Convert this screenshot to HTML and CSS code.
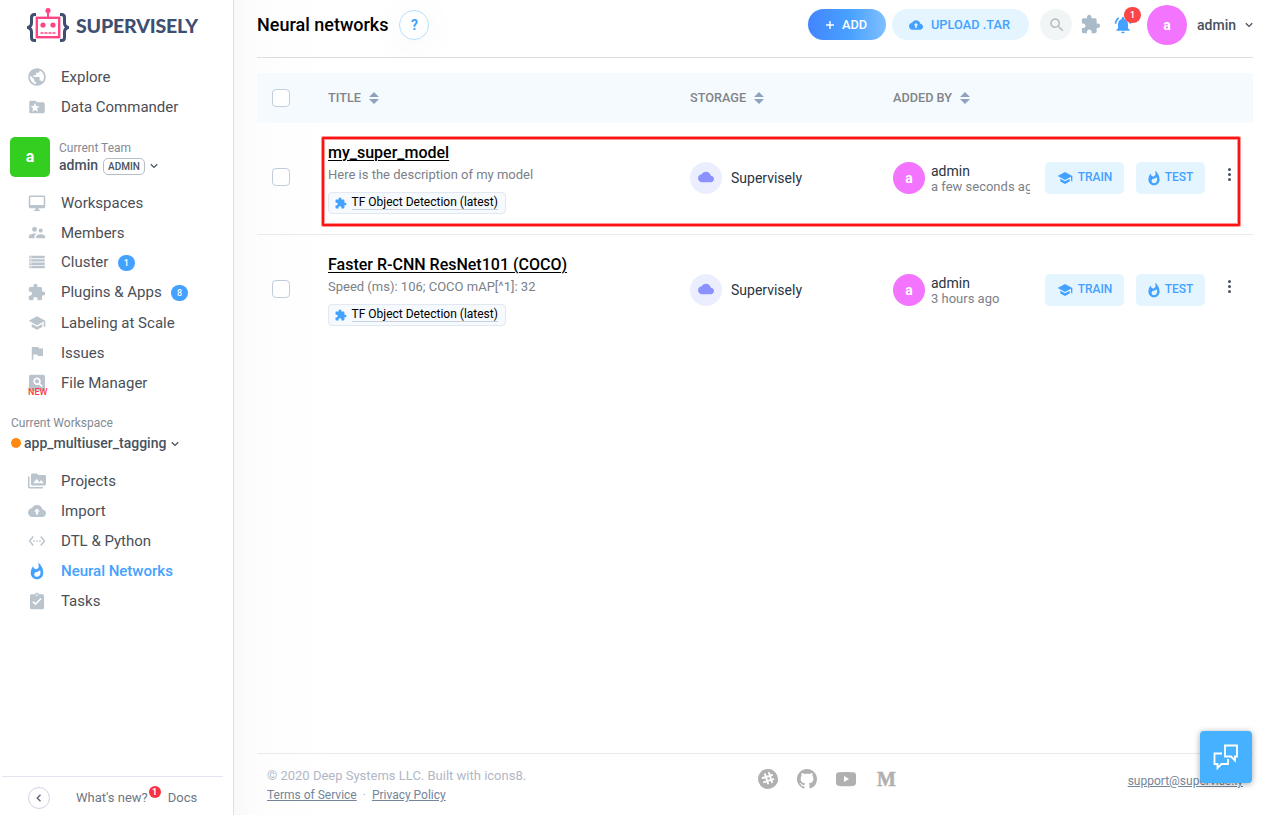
FILE: index.html
```html
<!DOCTYPE html>
<html lang="en">
<head>
<meta charset="utf-8">
<title>Neural networks</title>
<link rel="stylesheet" href="styles.css">
</head>
<body>
<svg class="sprite" aria-hidden="true">
  <symbol id="globe" viewBox="1.7 1.7 20.6 20.6"><path d="M12 2C6.48 2 2 6.48 2 12s4.48 10 10 10 10-4.48 10-10S17.52 2 12 2zm-1 17.930c-3.950-.490-7-3.850-7-7.930 0-.620.080-1.210.210-1.790L9 15v1c0 1.100.900 2 2 2v1.930zm6.900-2.540c-.260-.810-1-1.390-1.900-1.390h-1v-3c0-.550-.450-1-1-1H8v-2h2c.550 0 1-.450 1-1V7h2c1.100 0 2-.900 2-2v-.410c2.930 1.190 5 4.060 5 7.410 0 2.080-.800 3.970-2.100 5.390z"/></symbol>
  <symbol id="folder" viewBox="0.400 0.400 23.200 23.200"><path fill-rule="evenodd" d="M20 6h-8l-2-2H4c-1.100 0-2 .9-2 2v12c0 1.100.9 2 2 2h16c1.100 0 2-.9 2-2V8c0-1.100-.9-2-2-2zm-6.920 12L9.500 15.900 5.920 18l.95-4.070-3.160-2.740 4.160-.36L9.500 7l1.630 3.840 4.160.36-3.160 2.740z"/></symbol>
  <symbol id="monitor" viewBox="0 0 24 24"><path fill-rule="evenodd" d="M21 2H3c-1.100 0-2 .9-2 2v13c0 1.100.9 2 2 2h7v1.500l-2 1V22.500h8V21.500l-2-1V19h7c1.100 0 2-.9 2-2V4c0-1.100-.9-2-2-2zm0 12.500H3V4h18z"/></symbol>
  <symbol id="people" viewBox="1 1.500 22 22"><path d="M16.500 12c1.380 0 2.490-1.120 2.490-2.500S17.880 7 16.500 7 14 8.120 14 9.500s1.120 2.500 2.500 2.500zM9 11c1.660 0 2.990-1.340 2.990-3S10.660 5 9 5 6 6.340 6 8s1.340 3 3 3zm7.500 3c-1.830 0-5.500.92-5.500 2.750V19h11v-2.250c0-1.830-3.670-2.750-5.500-2.750zM9 13c-2.330 0-7 1.170-7 3.500V19h7v-2.250c0-.85.33-2.340 2.370-3.470C10.500 13.100 9.660 13 9 13z"/></symbol>
  <symbol id="storage" viewBox="0.400 0.400 23.200 23.200"><path fill-rule="evenodd" d="M2 4h20v3.200H2zm1.500 1v1.200h1.500V5zM2 8.300h20v3.200H2zm1.500 1v1.200h1.500V9.300zM2 12.600h20v3.200H2zm1.500 1v1.200h1.500v-1.200zM2 16.900h20v3.200H2zm1.500 1v1.200h1.500v-1.200z"/></symbol>
  <symbol id="puzzle" viewBox="1 0 23 23"><path d="M20.500 11H19V7c0-1.100-.9-2-2-2h-4V3.500C13 2.120 11.880 1 10.500 1S8 2.120 8 3.500V5H4c-1.100 0-1.990.9-1.990 2v3.800H3.500c1.490 0 2.700 1.210 2.700 2.700s-1.210 2.700-2.700 2.700H2V20c0 1.100.9 2 2 2h3.800v-1.500c0-1.490 1.210-2.700 2.700-2.700s2.700 1.210 2.700 2.700V22H17c1.100 0 2-.9 2-2v-4h1.500c1.380 0 2.500-1.120 2.500-2.500S21.880 11 20.500 11z"/></symbol>
  <symbol id="school" viewBox="0 0 24 24"><path d="M5 13.180v4L12 21l7-3.820v-4L12 17l-7-3.820zM12 3L1 9l11 6 9-4.910V17h2V9L12 3z"/></symbol>
  <symbol id="flag" viewBox="0 0 24 24"><path d="M14.400 6L14 4H5v17h2v-7h5.600l.4 2h7V6z"/></symbol>
  <symbol id="finder" viewBox="0.700 1 22.600 22.600"><path fill-rule="evenodd" d="M4 2h16a2 2 0 0 1 2 2v16a2 2 0 0 1-2 2H4a2 2 0 0 1-2-2V4a2 2 0 0 1 2-2zm8 3.500a4.700 4.700 0 1 0 2.500 8.700l3.300 3.300 1.500-1.500-3.300-3.300A4.700 4.700 0 0 0 12 5.500zm0 2a2.700 2.700 0 1 1 0 5.400 2.700 2.700 0 0 1 0-5.400z"/></symbol>
  <symbol id="photos" viewBox="0 0 24 24"><path fill-rule="evenodd" d="M2 6H0v14c0 1.100.9 2 2 2h18v-2H2V6zm20-2h-8l-2-2H6c-1.100 0-2 .9-2 2v12c0 1.100.9 2 2 2h16c1.100 0 2-.9 2-2V6c0-1.100-.9-2-2-2zM7 15l4.500-6 3.500 4.510 2.500-3.010L21 15H7z"/></symbol>
  <symbol id="upload" viewBox="0 0 24 24"><path d="M19.350 10.040C18.670 6.590 15.640 4 12 4 9.110 4 6.600 5.640 5.350 8.040 2.340 8.360 0 10.910 0 14c0 3.310 2.690 6 6 6h13c2.760 0 5-2.240 5-5 0-2.640-2.050-4.780-4.650-4.960zM13.500 12.500v4h-3v-4H8l4-4 4 4z"/></symbol>
  <symbol id="cloud" viewBox="0 0 24 24"><path d="M19.350 10.040C18.670 6.590 15.640 4 12 4 9.110 4 6.600 5.640 5.350 8.040 2.340 8.360 0 10.910 0 14c0 3.310 2.690 6 6 6h13c2.760 0 5-2.240 5-5 0-2.640-2.050-4.780-4.650-4.960z"/></symbol>
  <symbol id="code" viewBox="0 0 24 24"><path d="M7.770 6.760L6.230 5.480.82 12l5.410 6.520 1.540-1.280L3.420 12l4.350-5.240zM7 13h2v-2H7v2zm10-2h-2v2h2v-2zm-6 2h2v-2h-2v2zm6.770-7.520l-1.540 1.280L20.580 12l-4.350 5.240 1.540 1.280L23.180 12l-5.410-6.520z"/></symbol>
  <symbol id="fire" viewBox="0.500 0 23 23"><path d="M13.500.67s.74 2.650.74 4.800c0 2.060-1.350 3.730-3.410 3.730-2.070 0-3.630-1.670-3.630-3.730l.03-.36C5.210 7.510 4 10.620 4 14c0 4.420 3.580 8 8 8s8-3.580 8-8C20 8.610 17.410 3.800 13.500.67zM11.710 19c-1.780 0-3.220-1.400-3.220-3.140 0-1.620 1.050-2.760 2.810-3.120 1.770-.36 3.600-1.210 4.620-2.580.39 1.290.59 2.650.59 4.040 0 2.650-2.150 4.800-4.800 4.800z"/></symbol>
  <symbol id="task" viewBox="0.500 0 23 23"><path d="M19 3h-4.180C14.400 1.840 13.300 1 12 1c-1.300 0-2.400.84-2.820 2H5c-1.100 0-2 .9-2 2v15c0 1.100.9 2 2 2h14c1.100 0 2-.9 2-2V5c0-1.100-.9-2-2-2zm-7 0c.55 0 1 .45 1 1s-.45 1-1 1-1-.45-1-1 .45-1 1-1zm-2 14l-4-4 1.410-1.410L10 14.170l6.590-6.590L18 9l-8 8z"/></symbol>
  <symbol id="search" viewBox="0 0 24 24"><path d="M15.500 14h-.79l-.28-.27C15.410 12.590 16 11.110 16 9.500 16 5.910 13.090 3 9.500 3S3 5.910 3 9.500 5.910 16 9.500 16c1.610 0 3.090-.59 4.230-1.570l.27.28v.79l5 4.990L20.490 19l-4.990-5zm-6 0C7.010 14 5 11.990 5 9.500S7.010 5 9.500 5 14 7.010 14 9.500 11.990 14 9.500 14z"/></symbol>
  <symbol id="bell" viewBox="0 0 24 24"><path d="M7.580 4.080L6.150 2.650C3.750 4.480 2.170 7.300 2.030 10.500h2c.15-2.650 1.510-4.970 3.550-6.420zM19.970 10.500h2c-.15-3.200-1.730-6.020-4.120-7.850l-1.420 1.430c2.020 1.450 3.390 3.770 3.540 6.420zM18 11c0-3.070-1.640-5.640-4.500-6.320V4c0-.83-.67-1.500-1.500-1.500s-1.500.67-1.500 1.500v.68C7.630 5.360 6 7.920 6 11v5l-2 2v1h16v-1l-2-2v-5zm-6 11c1.100 0 2-.9 2-2h-4c0 1.100.9 2 2 2z"/></symbol>
  <symbol id="down" viewBox="0 0 8 8"><path d="M.8 2.300L4 5.400 7.200 2.300" fill="none" stroke="currentColor" stroke-width="1.300"/></symbol>
  <symbol id="sort" viewBox="0 0 10 12"><path d="M5 0l5 5H0zM0 7h10l-5 5z"/></symbol>
</svg>

<div class="app">
  <aside class="sidebar">
    <div class="logo">
      <svg class="logo-mark" viewBox="0 0 42 36">
        <g fill="none" stroke="#3f4f72" stroke-width="3"><path d="M9 7.500H7.500Q4.500 7.500 4.500 10.500V16Q4.500 19.500 1 20.500Q4.500 21.500 4.500 25V30.500Q4.500 33.500 7.500 33.500H9"/><path d="M33 7.500h1.500q3 0 3 3V16q0 3.500 3.500 4.500q-3.500 1-3.500 4.500v5.500q0 3-3 3H33"/></g>
        <rect x="9.800" y="10.800" width="22.400" height="19.400" fill="none" stroke="#ff4583" stroke-width="2.400"/>
        <path d="M21 10V3" stroke="#ff4583" stroke-width="2"/>
        <circle cx="21" cy="3.500" r="2.600" fill="#ff4583"/><circle cx="16" cy="18" r="2.600" fill="#ff4583"/><circle cx="26" cy="18" r="2.600" fill="#ff4583"/>
        <path d="M13.500 26h15" stroke="#ff4583" stroke-width="1.600" stroke-dasharray="3 1"/>
      </svg>
      <span class="logo-text">SUPERVISELY</span>
    </div>
    <nav class="nav nav-top">
      <a class="item"><svg class="ico"><use href="#globe"/></svg>Explore</a>
      <a class="item"><svg class="ico"><use href="#folder"/></svg>Data Commander</a>
    </nav>
    <div class="team">
      <div class="team-avatar">a</div>
      <div class="team-info">
        <div class="caption">Current Team</div>
        <div class="team-name">admin<span class="role">ADMIN</span><svg class="chev"><use href="#down"/></svg></div>
      </div>
    </div>
    <nav class="nav nav-team">
      <a class="item"><svg class="ico"><use href="#monitor"/></svg>Workspaces</a>
      <a class="item"><svg class="ico"><use href="#people"/></svg>Members</a>
      <a class="item raised"><svg class="ico"><use href="#storage"/></svg>Cluster<span class="count">1</span></a>
      <a class="item raised"><svg class="ico"><use href="#puzzle"/></svg>Plugins &amp; Apps<span class="count">8</span></a>
      <a class="item"><svg class="ico"><use href="#school"/></svg>Labeling at Scale</a>
      <a class="item"><svg class="ico"><use href="#flag"/></svg>Issues</a>
      <a class="item"><svg class="ico"><use href="#finder"/></svg>File Manager<span class="new">NEW</span></a>
    </nav>
    <div class="workspace">
      <div class="caption">Current Workspace</div>
      <div class="workspace-name"><i class="dot"></i>app_multiuser_tagging<svg class="chev"><use href="#down"/></svg></div>
    </div>
    <nav class="nav">
      <a class="item"><svg class="ico"><use href="#photos"/></svg>Projects</a>
      <a class="item"><svg class="ico"><use href="#upload"/></svg>Import</a>
      <a class="item"><svg class="ico"><use href="#code"/></svg>DTL &amp; Python</a>
      <a class="item active"><svg class="ico"><use href="#fire"/></svg>Neural Networks</a>
      <a class="item"><svg class="ico"><use href="#task"/></svg>Tasks</a>
    </nav>
    <div class="side-foot">
      <span class="collapse"><svg viewBox="0 0 8 8"><path d="M5.500 .8L2.300 4l3.200 3.200" fill="none" stroke="#5b6675" stroke-width="1.400"/></svg></span>
      <span class="whats">What's new?<b class="alert">1</b></span>
      <span>Docs</span>
    </div>
  </aside>

  <main class="main">
    <header class="head">
      <h1>Neural networks</h1><span class="help">?</span>
      <div class="tools">
        <button class="btn add"><svg viewBox="0 0 10 10"><path d="M5 1v8M1 5h8" stroke="#fff" stroke-width="1.400"/></svg>ADD</button>
        <button class="btn tar"><svg class="tar-ico"><use href="#upload"/></svg>UPLOAD .TAR</button>
        <span class="find"><svg><use href="#search"/></svg></span>
        <svg class="apps"><use href="#puzzle"/></svg>
        <span class="bell"><svg><use href="#bell"/></svg><b>1</b></span>
        <span class="avatar big">a</span>
        <span class="user">admin</span><svg class="chev"><use href="#down"/></svg>
      </div>
    </header>

    <section class="table">
      <div class="row thead">
        <div><span class="check"></span></div>
        <div class="th">TITLE<svg><use href="#sort"/></svg></div>
        <div class="th">STORAGE<svg><use href="#sort"/></svg></div>
        <div class="th">ADDED BY<svg><use href="#sort"/></svg></div>
        <div></div>
      </div>
      <div class="row body">
        <div class="check-cell"><span class="check"></span></div>
        <div class="title-cell">
          <div><a class="name">my_super_model</a></div>
          <div class="desc">Here is the description of my model</div>
          <div class="tag"><svg><use href="#puzzle"/></svg><span>TF Object Detection (latest)</span></div>
        </div>
        <div class="flexcell"><span class="cloud"><svg><use href="#cloud"/></svg></span><span class="store">Supervisely</span></div>
        <div class="flexcell by"><span class="avatar">a</span><div class="who"><div>admin</div><div class="when">a few seconds ago</div></div></div>
        <div class="flexcell acts"><button class="act train"><svg><use href="#school"/></svg>TRAIN</button><button class="act test"><svg><use href="#fire"/></svg>TEST</button><span class="more"><i></i><i></i><i></i></span></div>
        <div class="highlight"></div>
      </div>
      <div class="row body">
        <div class="check-cell"><span class="check"></span></div>
        <div class="title-cell">
          <div><a class="name">Faster R-CNN ResNet101 (COCO)</a></div>
          <div class="desc">Speed (ms): 106; COCO mAP[^1]: 32</div>
          <div class="tag"><svg><use href="#puzzle"/></svg><span>TF Object Detection (latest)</span></div>
        </div>
        <div class="flexcell"><span class="cloud"><svg><use href="#cloud"/></svg></span><span class="store">Supervisely</span></div>
        <div class="flexcell by"><span class="avatar">a</span><div class="who"><div>admin</div><div class="when">3 hours ago</div></div></div>
        <div class="flexcell acts"><button class="act train"><svg><use href="#school"/></svg>TRAIN</button><button class="act test"><svg><use href="#fire"/></svg>TEST</button><span class="more"><i></i><i></i><i></i></span></div>
      </div>
    </section>

    <footer class="foot">
      <div class="legal">
        <div>© 2020 Deep Systems LLC. Built with icons8.</div>
        <div class="links"><a>Terms of Service</a><span>·</span><a>Privacy Policy</a></div>
      </div>
      <div class="social">
        <svg viewBox="0 0 20 20"><path d="M5 1Q11-1 14.500 1T19 6Q21 11 19 14.500T14 19Q9 21 5.500 19T1 14Q-1 9 1 5.500T5 1z"/><g stroke="#fff" stroke-width="1.900" stroke-linecap="round"><path d="M7 5.200l3 9.200M11 4l3 9.200M4.700 9l9.400-3M6 13.200l9.400-3"/></g></svg>
        <svg viewBox="0 0 16 16"><path d="M8 0C3.580 0 0 3.580 0 8c0 3.540 2.290 6.530 5.470 7.590.4.070.55-.17.55-.38 0-.19-.01-.82-.01-1.490-2.010.37-2.530-.49-2.690-.94-.09-.23-.48-.94-.82-1.130-.28-.15-.68-.52-.01-.53.63-.01 1.080.58 1.230.82.72 1.210 1.870.87 2.330.66.07-.52.28-.87.51-1.070-1.780-.2-3.640-.89-3.640-3.950 0-.87.31-1.590.82-2.150-.08-.2-.36-1.020.08-2.120 0 0 .67-.21 2.200.82.64-.18 1.320-.27 2-.27s1.360.09 2 .27c1.530-1.040 2.200-.82 2.200-.82.44 1.100.16 1.920.08 2.120.51.56.82 1.270.82 2.150 0 3.070-1.870 3.750-3.650 3.950.29.25.54.73.54 1.480 0 1.070-.01 1.930-.01 2.200 0 .21.15.46.55.38A8.010 8.010 0 0 0 16 8c0-4.420-3.580-8-8-8z"/></svg>
        <svg viewBox="0 0 20 20"><path fill-rule="evenodd" d="M3 3.200Q10 2.600 17 3.200Q20 3.500 20 6v8q0 2.500-3 2.900Q10 17.500 3 16.900Q0 16.500 0 14V6Q0 3.500 3 3.200zM8 7v6l5-3z"/></svg>
        <span class="medium">M</span>
      </div>
      <a class="support">support@supervise.ly</a>
    </footer>
    <div class="chat"><svg viewBox="0 0 26 26"><g fill="none" stroke="#fff" stroke-width="1.800"><path d="M12 1.500h12v11h-2v4l-4-4h-6z"/><path d="M9 9.500H1.500v10.500h3v4l4-4H15v-5"/></g></svg></div>
  </main>
</div>
</body>
</html>
```
FILE: styles.css
```css
* { box-sizing: border-box; }
body { margin: 0; font-family: Roboto, "Liberation Sans", sans-serif; font-size: 15px; color: #48525e; background: #fff; }
svg { fill: currentColor; flex: none; display: block; }
.sprite { position: absolute; width: 0; height: 0; }
.app { display: flex; height: 815px; overflow: hidden; }

.sidebar { width: 234px; flex: none; border-right: 1px solid #dfe0e8; display: flex; flex-direction: column; }
.logo { display: flex; align-items: center; height: 43px; padding: 6px 0 0 27px; gap: 7px; }
.logo-mark { width: 42px; height: 36px; }
.logo-text { font: 900 19.500px/24px Lato, sans-serif; color: #3f4f72; letter-spacing: -.15px; padding-top: 2px; }
.nav-top { padding-top: 19px; }
.item { display: flex; align-items: center; height: 30px; padding-left: 28px; position: relative; color: #4a4f57; }
.item.raised { padding-bottom: 2px; }
.ico { width: 18px; height: 18px; color: #bac4cd; margin-right: 15px; }
.active, .active .ico { color: #43a1ff; }
.active { font-weight: 500; }
.count { margin-left: 9.500px; width: 17px; height: 16px; border-radius: 8px; background: #43a1ff; color: #fff; font-size: 9px; line-height: 16px; text-align: center; font-weight: 500; margin-top: 1px; }
.new { position: absolute; left: 28px; top: 19px; font-size: 9px; line-height: 10px; font-weight: 500; color: #fb3b46; }
.caption { font-size: 12px; color: #838a93; line-height: 16px; }
.chev { width: 8px; height: 8px; color: #48525e; }
.team { display: flex; padding: 15px 0 0 10px; gap: 9px; }
.team-avatar { width: 40px; height: 40px; border-radius: 5px; background: #33ce1f; color: #fff; font-weight: 700; font-size: 16px; line-height: 40px; text-align: center; }
.team-info { padding-top: 3px; }
.team-name { display: flex; align-items: center; font-size: 14px; font-weight: 500; line-height: 18px; height: 17px; }
.role { border: 1px solid #b4bdc8; border-radius: 5px; font-size: 10px; line-height: 15px; height: 17px; padding: 0 4px; margin: 4px 5px 0 5px; }
.team-name .chev { margin-top: 2px; }
.nav-team { padding-top: 11px; }
.workspace { padding: 17px 0 11px 11px; }
.workspace-name { display: flex; align-items: center; font-size: 14px; font-weight: 500; line-height: 24px; }
.workspace .chev { margin: 1px 0 0 5px; }
.dot { width: 10px; height: 10px; border-radius: 5px; background: #ff8811; margin-right: 3px; }
.side-foot { margin: auto 10px 0 2px; border-top: 1px solid #e2e4ee; height: 39px; padding: 3px 0 0 26px; display: flex; align-items: center; font-size: 13px; color: #6f7783; }
.collapse { width: 22px; height: 22px; border: 1px solid #ced4e4; border-radius: 50%; margin-right: 26px; display: grid; place-items: center; }
.collapse svg { width: 8px; height: 8px; }
.whats { margin-right: 20px; position: relative; }
.alert { position: absolute; right: -13px; top: -4px; width: 12px; height: 12px; border-radius: 6px; background: #fa3240; color: #fff; font-size: 9px; line-height: 12px; text-align: center; }

.main { flex: 1; padding: 0 24px 0 23px; position: relative; display: flex; flex-direction: column; background: linear-gradient(90deg, #f9f9fa 0, #fdfdfd 22px, #fefefe 60px, #fff 100px); }
.head { height: 58px; border-bottom: 1px solid #dcdde3; display: flex; align-items: center; padding-bottom: 8px; }
h1 { margin: 0; font-size: 18px; font-weight: 500; color: #000; }
.help { width: 30px; height: 30px; border: 1px solid #b8e0fb; border-radius: 50%; margin-left: 11px; background: #fff; color: #43a1ff; font-weight: 700; font-size: 14px; line-height: 28px; text-align: center; box-shadow: 0 6px 40px rgba(0,0,0,.06); }
.tools { margin-left: auto; display: flex; align-items: center; color: #48525e; }
.btn { border: 0; height: 31px; border-radius: 16px; font: 500 12.800px Roboto, sans-serif; display: flex; align-items: center; justify-content: center; padding: 0 2px 0 0; }
.add { width: 78px; color: #fff; background: linear-gradient(90deg, #4285ff, #49a2ff 55%, #80bfff); gap: 7px; }
.add svg { width: 10px; height: 10px; }
.tar { width: 137px; margin-left: 6px; background: #e4f5ff; color: #43a1ff; gap: 8px; }
.tar-ico { width: 14px; height: 14px; }
.find { width: 32px; height: 31px; border-radius: 16px; background: #f2f5f6; color: #b8bcbf; display: grid; place-items: center; margin-left: 11px; padding-left: 1px; }
.find svg { width: 18px; height: 18px; }
.apps { width: 20px; height: 20px; color: #a9bac9; margin: -2px 0 0 9px; }
.bell { position: relative; color: #43a1ff; margin-left: 12px; }
.bell svg { width: 20px; height: 20px; }
.bell b { position: absolute; left: 11px; top: -8px; width: 17px; height: 16px; border-radius: 8px; background: #fa4646; color: #fff; font-size: 9px; line-height: 16px; text-align: center; font-weight: 500; }
.avatar { width: 32px; height: 32px; border-radius: 50%; background: #f274ff; color: #fff; font-weight: 700; font-size: 14px; line-height: 32px; text-align: center; flex: none; }
.avatar.big { width: 40px; height: 40px; line-height: 40px; margin-left: 14px; }
.user { font-size: 14px; font-weight: 500; margin: 0 9px 0 10px; }

.table { margin-top: 15px; }
.row { display: grid; grid-template-columns: 71px 362px 203px 152px 1fr; position: relative; }
.thead { height: 50px; background: #f5fafe; align-items: center; }
.check { display: block; width: 18px; height: 18px; border: 1px solid #c2cddb; border-radius: 4px; background: #fff; margin-left: 15px; }
.th { display: flex; align-items: center; gap: 8px; font-size: 12.700px; line-height: 14px; padding-bottom: 1px; font-weight: 500; color: #818488; }
.th svg { width: 10px; height: 12px; color: #8fa3bd; }
.body { height: 112px; border-bottom: 1px solid #e8eaed; }
.body:last-child { border-bottom-color: transparent; }
.check-cell { padding-top: 45px; }
.title-cell { padding-top: 19px; }
.title-cell > :first-child { height: 22px; }
.name { font-size: 16px; line-height: 22px; font-weight: 500; color: #000; text-decoration: underline; text-underline-offset: 2px; text-decoration-thickness: 1px; }
.desc { font-size: 13px; line-height: 22px; color: #7b8189; }
.tag { display: inline-flex; align-items: flex-start; margin-top: 6px; height: 22px; padding: 3px 7.500px 0 6px; border: 1px solid #e2e8ef; border-radius: 4px; background: #f6f9fd; font-size: 12px; color: #000; gap: 4.500px; }
.tag span { line-height: 13px; border-bottom: 1px solid #c9d1dc; }
.tag svg { width: 12px; height: 12px; color: #43a1ff; margin-top: 1px; }
.flexcell { display: flex; align-items: center; height: 110px; }
.cloud { width: 32px; height: 32px; border-radius: 50%; background: #ebeeff; color: #8b92ff; display: grid; place-items: center; margin-right: 9px; }
.cloud svg { width: 16px; height: 16px; margin-top: -2px; }
.store { font-size: 14px; color: #2b3440; }
.by { overflow: hidden; margin-right: 15px; }
.who { margin-left: 6px; font-size: 14px; line-height: 16px; white-space: nowrap; color: #2b3440; }
.when { font-size: 13px; line-height: 15px; color: #7b8189; }
.act { border: 0; height: 32px; border-radius: 5px; background: #e4f5ff; color: #43a1ff; font: 500 12px Roboto, sans-serif; display: flex; align-items: center; justify-content: center; gap: 5px; padding: 0 0 2px; }
.act svg { width: 16px; height: 16px; margin-top: 1px; }
.train { width: 79px; }
.test { width: 69px; margin-left: 12px; gap: 3px; padding-right: 2px; }
.more { margin: -8px 0 0 22.500px; display: grid; gap: 2px; }
.more i { width: 3px; height: 3px; border-radius: 2px; background: #48525e; }
.highlight { position: absolute; left: 65px; top: 14px; width: 918px; height: 89px; border: 2px solid #fc1414; box-shadow: 0 0 0 1px rgba(252,20,20,.45), inset 0 0 0 1px rgba(252,20,20,.45); border-radius: 1px; }

.foot { margin-top: auto; height: 62px; border-top: 1px solid #e8e9ec; display: flex; position: relative; padding: 12px 10px 0; font-size: 13px; color: #b1b7c6; }
.legal { width: 491px; line-height: 19px; }
.foot a { text-decoration: underline; color: #748599; }
.links { font-size: 12px; display: flex; gap: 6px; padding-top: 1px; }
.social { display: flex; gap: 19px; color: #b0b0b0; padding-top: 3px; height: 24px; }
.social svg { width: 20px; height: 20px; }
.medium { font: 700 20px/20px "Liberation Serif", serif; -webkit-text-stroke: .5px #b0b0b0; padding-left: 2px; }
.support { margin: 5px 0 0 auto; font-size: 12px; line-height: 20px; height: 20px; }
.chat { position: absolute; right: 25px; top: 731px; width: 52px; height: 52px; border-radius: 4px; background: #46b1ff; display: grid; place-items: center; box-shadow: 0 1px 6px rgba(0,0,0,.35); }
.chat svg { width: 26px; height: 26px; }
```
